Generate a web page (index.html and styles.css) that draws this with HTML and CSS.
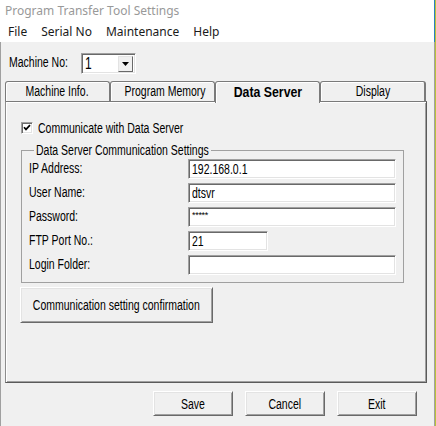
FILE: index.html
```html
<!DOCTYPE html>
<html lang="en">
<head>
  <meta charset="UTF-8">
  <title>Program Transfer Tool Settings</title>
  <link rel="stylesheet" href="styles.css">
</head>
<body>

  <div class="window">
    <div class="titlebar">Program Transfer Tool Settings</div>

    <div class="menubar">
      <span class="menu-item">File</span>
      <span class="menu-item">Serial No</span>
      <span class="menu-item">Maintenance</span>
      <span class="menu-item">Help</span>
    </div>

    <div class="client">
      <div class="machine-row">
        <span class="machine-label"><span class="txt">Machine No:</span></span>
        <div class="combo">
          <span class="combo-value"><span class="txt">1</span></span>
          <span class="combo-btn">
            <svg width="7" height="4" viewBox="0 0 7 4"><path d="M0 0H7L3.5 4Z" fill="#000"/></svg>
          </span>
        </div>
      </div>

      <div class="tabs">
        <div class="tab"><span class="txt mid">Machine Info.</span></div>
        <div class="tab"><span class="txt mid">Program Memory</span></div>
        <div class="tab active"><span class="txt mid">Data Server</span></div>
        <div class="tab tab-last"><span class="txt mid">Display</span></div>
      </div>

      <div class="panel">
        <div class="check-row">
          <span class="checkbox">
            <svg width="8" height="8" viewBox="0 0 8 8"><path d="M1 3.2L3 5.4L7 1.2" fill="none" stroke="#000" stroke-width="1.7"/></svg>
          </span>
          <span class="txt">Communicate with Data Server</span>
        </div>

        <fieldset class="group">
          <legend><span class="txt">Data Server Communication Settings</span></legend>

          <div class="field-row">
            <span class="field-label"><span class="txt">IP Address:</span></span>
            <div class="field"><span class="txt">192.168.0.1</span></div>
          </div>
          <div class="field-row">
            <span class="field-label"><span class="txt">User Name:</span></span>
            <div class="field"><span class="txt">dtsvr</span></div>
          </div>
          <div class="field-row">
            <span class="field-label"><span class="txt">Password:</span></span>
            <div class="field password">*****</div>
          </div>
          <div class="field-row">
            <span class="field-label"><span class="txt">FTP Port No.:</span></span>
            <div class="field short"><span class="txt">21</span></div>
          </div>
          <div class="field-row">
            <span class="field-label"><span class="txt">Login Folder:</span></span>
            <div class="field"></div>
          </div>
        </fieldset>

        <div class="btn confirm"><span class="txt mid">Communication setting confirmation</span></div>
      </div>

      <div class="actions">
        <div class="btn action"><span class="txt mid">Save</span></div>
        <div class="btn action"><span class="txt mid">Cancel</span></div>
        <div class="btn action"><span class="txt mid">Exit</span></div>
      </div>
    </div>
  </div>

</body>
</html>
```

FILE: styles.css
```css
/* General Styles */
body {
  margin: 0;
  padding: 0;
  background-color: #b8c23a;
  font-family: "Liberation Sans", Arial, sans-serif;
  font-size: 14px;
  line-height: 16px;
  color: #000;
}

/* the dialog font is a narrow sans; squeeze Arial-width text to fit */
.txt {
  display: inline-block;
  white-space: nowrap;
  transform: scaleX(0.75);
  transform-origin: 0 50%;
}

.txt.mid {
  transform-origin: 50% 50%;
}

.window {
  width: 435px;
  height: 426px;
  display: flex;
  flex-direction: column;
  background-color: #f0f0f0;
}

/* Title and menu */
.titlebar {
  height: 22px;
  line-height: 21px;
  padding-left: 5px;
  background-color: #fff;
  color: #999;
  font-family: "Noto Sans", sans-serif;
  font-size: 12px;
  border-right: 1px solid #2a7fbf;
}

.menubar {
  height: 20px;
  display: flex;
  padding-left: 1px;
  background-color: #fff;
  font-family: "Noto Sans", sans-serif;
  font-size: 12px;
  line-height: 20px;
  color: #1a1a1a;
  border-right: 1px solid #2a7fbf;
}

.menu-item {
  padding: 0 7px;
}

/* Client area */
.client {
  flex: 1;
  padding: 11px 0 0 4px;
  border-left: 1px solid #a0a0a0;
  border-right: 1px solid #a0a0a0;
}

.machine-row {
  display: flex;
  align-items: center;
  height: 21px;
}

.machine-label {
  width: 72px;
  margin-left: 4px;
  padding-bottom: 3px;
}

.combo {
  width: 55px;
  height: 21px;
  box-sizing: border-box;
  display: flex;
  align-items: center;
  justify-content: space-between;
  background-color: #fff;
  border-top: 1px solid #a0a0a0;
  border-left: 1px solid #a0a0a0;
  border-bottom: 1px solid #fff;
  border-right: 1px solid #fff;
  box-shadow: inset 1px 1px 0 #696969, inset -1px -1px 0 #e3e3e3;
  padding: 1px 2px 1px 3px;
}

.combo-value {
  font-size: 16px;
}

.combo-btn {
  width: 15px;
  height: 16px;
  box-sizing: border-box;
  display: flex;
  align-items: center;
  justify-content: center;
  background-color: #f0f0f0;
  border-top: 1px solid #e3e3e3;
  border-left: 1px solid #e3e3e3;
  border-right: 1px solid #696969;
  border-bottom: 1px solid #696969;
}

/* Tabs */
.tabs {
  display: flex;
  margin-top: 7px;
  height: 20px;
  position: relative;
  z-index: 1;
}

.tab {
  width: 105px;
  height: 20px;
  box-sizing: border-box;
  text-align: center;
  line-height: 19px;
  background-color: #f0f0f0;
  border: 1px solid #7a7a7a;
  border-bottom: none;
  border-radius: 3px 3px 0 0;
  box-shadow: inset 1px 1px 0 #fff;
}

.tab-last {
  width: 106px;
  border-right-width: 2px;
}

.tab.active {
  font-weight: bold;
  height: 22px;
  line-height: 21px;
}

.tab.active .txt {
  transform: scaleX(0.88);
}

.panel {
  width: 422px;
  height: 282px;
  box-sizing: border-box;
  padding: 19px 0 0 15px;
  border-top: 1px solid #7a7a7a;
  border-left: 1px solid #8c8c8c;
  border-right: 1px solid #5a5a5a;
  border-bottom: 1px solid #5a5a5a;
  box-shadow: inset 1px 1px 0 #fff, inset -1px -1px 0 #a0a0a0;
}

.check-row {
  display: flex;
  align-items: center;
  height: 14px;
  gap: 5px;
}

.checkbox {
  width: 12px;
  height: 12px;
  box-sizing: border-box;
  display: flex;
  align-items: center;
  justify-content: center;
  background-color: #fff;
  border-top: 1px solid #a0a0a0;
  border-left: 1px solid #a0a0a0;
  border-bottom: 1px solid #fff;
  border-right: 1px solid #fff;
  box-shadow: inset 1px 1px 0 #696969, inset -1px -1px 0 #e3e3e3;
}

/* Group box */
.group {
  width: 383px;
  box-sizing: border-box;
  margin: 8px 0 0;
  padding: 1px 6px 7px 7px;
  border: 1px solid #a0a0a0;
  display: flex;
  flex-direction: column;
  gap: 4px;
}

.group legend {
  width: 173px;
  padding: 0 2px;
  margin-left: 5px;
  line-height: 15px;
}

.field-row {
  display: flex;
  align-items: center;
  height: 20px;
}

.field-label {
  width: 159px;
  padding-bottom: 3px;
}

.field {
  width: 208px;
  height: 20px;
  box-sizing: border-box;
  padding: 1px 2px 0 3px;
  line-height: 17px;
  background-color: #fff;
  border-top: 1px solid #a0a0a0;
  border-left: 1px solid #a0a0a0;
  border-bottom: 1px solid #fff;
  border-right: 1px solid #fff;
  box-shadow: inset 1px 1px 0 #696969, inset -1px -1px 0 #e3e3e3;
}

.field.short {
  width: 80px;
}

.field.password {
  font-size: 9px;
  line-height: 13px;
  letter-spacing: -0.3px;
}

/* Buttons */
.btn {
  box-sizing: border-box;
  display: flex;
  align-items: center;
  justify-content: center;
  background-color: #f0f0f0;
  border-top: 1px solid #fff;
  border-left: 1px solid #fff;
  border-right: 1px solid #696969;
  border-bottom: 1px solid #696969;
  box-shadow: inset 1px 1px 0 #e3e3e3, inset -1px -1px 0 #a0a0a0;
}

.confirm {
  width: 193px;
  height: 36px;
  margin: 4px 0 0 -1px;
}

.actions {
  width: 422px;
  box-sizing: border-box;
  display: flex;
  justify-content: flex-end;
  gap: 12px;
  margin-top: 8px;
  padding-right: 10px;
}

.action {
  width: 80px;
  height: 25px;
}
```
